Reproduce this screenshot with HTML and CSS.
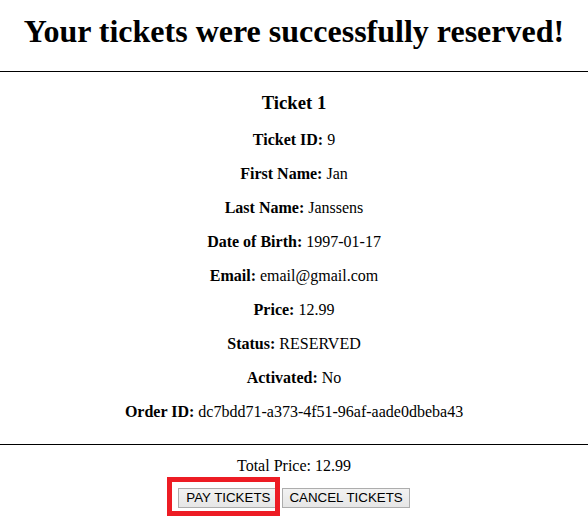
FILE: index.html
```html
<!DOCTYPE html>
<html>
<head>
<meta charset="utf-8">
<title>Tickets reserved</title>
<link rel="stylesheet" href="styles.css">
</head>
<body>
<h1 class="title">Your tickets were successfully reserved!</h1>
<hr class="rule">
<div class="ticket">
  <h3 class="ticket-title">Ticket 1</h3>
  <p class="field"><b>Ticket ID:</b> 9</p>
  <p class="field"><b>First Name:</b> Jan</p>
  <p class="field"><b>Last Name:</b> Janssens</p>
  <p class="field"><b>Date of Birth:</b> 1997-01-17</p>
  <p class="field"><b>Email:</b> email@gmail.com</p>
  <p class="field"><b>Price:</b> 12.99</p>
  <p class="field"><b>Status:</b> RESERVED</p>
  <p class="field"><b>Activated:</b> No</p>
  <p class="field"><b>Order ID:</b> dc7bdd71-a373-4f51-96af-aade0dbeba43</p>
</div>
<hr class="rule rule-bottom">
<div class="total">Total Price: 12.99</div>
<div class="actions">
  <span class="highlight">
    <button class="btn btn-pay">PAY TICKETS</button>
    <span class="highlight-box"></span>
  </span>
  <button class="btn">CANCEL TICKETS</button>
</div>
</body>
</html>
```
FILE: styles.css
```css
html, body {
  margin: 0;
  padding: 0;
  background: #fff;
}
body {
  font-family: "Liberation Serif", "Times New Roman", serif;
  font-size: 16px;
  color: #000;
  text-align: center;
  padding-bottom: 20px;
}
.title {
  font-size: 32px;
  font-weight: bold;
  margin: 13px 0 21px;
  line-height: 37px;
}
.rule {
  border: 0;
  border-top: 1px solid #000;
  margin: 0;
  height: 0;
}
.ticket {
  padding-bottom: 7px;
}
.ticket-title {
  font-size: 18.72px;
  margin: 20px 0 17px;
}
.field {
  margin: 16px 0;
  line-height: 18px;
}
.total {
  margin-top: 12px;
  line-height: 18px;
}
.actions {
  display: flex;
  justify-content: center;
  align-items: flex-start;
  gap: 4px;
  margin-top: 13px;
}
.highlight {
  position: relative;
  display: flex;
}
.highlight-box {
  position: absolute;
  left: -11px;
  right: -2px;
  top: -11px;
  bottom: -8px;
  border: 5px solid #ed1c24;
  pointer-events: none;
}
.btn {
  font-family: "Liberation Sans", Arial, sans-serif;
  font-size: 13.33px;
  color: #000;
  background: linear-gradient(#f2f2f2, #e6e6e6);
  border: 1px solid #adadad;
  border-radius: 0;
  padding: 2px 6px;
  margin: 0;
  line-height: 14px;
}
.btn-pay {
  padding: 2px 7px;
}
```
